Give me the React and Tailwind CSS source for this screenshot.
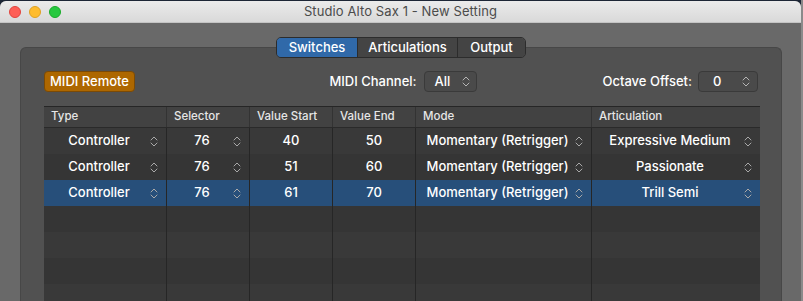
import React from 'react'

const Chevrons = ({ className = '' }) => (
  <svg width="8" height="13" viewBox="0 0 8 13" className={className} fill="none" stroke="currentColor" strokeWidth="1" strokeLinecap="round" strokeLinejoin="round">
    <path d="M1 5 L4 2 L7 5" />
    <path d="M1 8 L4 11 L7 8" />
  </svg>
)

const cols = [
  { label: 'Type', w: 'w-[123px]' },
  { label: 'Selector', w: 'w-[83px]' },
  { label: 'Value Start', w: 'w-[83px]' },
  { label: 'Value End', w: 'w-[83px]' },
  { label: 'Mode', w: 'w-[176px]' },
  { label: 'Articulation', w: 'w-[168px]' },
]

const rows = [
  ['Controller', '76', '40', '50', 'Momentary (Retrigger)', 'Expressive Medium'],
  ['Controller', '76', '51', '60', 'Momentary (Retrigger)', 'Passionate'],
  ['Controller', '76', '61', '70', 'Momentary (Retrigger)', 'Trill Semi'],
]

// which columns are popup menus (text + chevrons)
const popup = [true, true, false, false, true, true]

export default function App() {
  const allRows = [...rows, null, null, null, null]

  return (
    <div className="w-[803px] h-[301px] overflow-hidden bg-[#1d2636] flex font-['Inter',sans-serif]">
      <div className="w-[801px] h-[301px] mt-[1px] rounded-t-[6px] overflow-hidden flex flex-col bg-[#696969]">
        {/* title bar */}
        <div className="h-[22px] shrink-0 relative flex items-center justify-center bg-gradient-to-b from-[#ebebeb] to-[#d9d9d9] border-b border-[#c4c4c4]">
          <div className="absolute left-[9px] top-[5px] flex gap-[8px]">
            <div className="w-[12px] h-[12px] rounded-full bg-[#fe5f57] border border-[#e0443e]" />
            <div className="w-[12px] h-[12px] rounded-full bg-[#febc2e] border border-[#dea123]" />
            <div className="w-[12px] h-[12px] rounded-full bg-[#28c840] border border-[#1aab29]" />
          </div>
          <span className="text-[13px] text-[#4b4b4b] tracking-[0.1px]">Studio Alto Sax 1 - New Setting</span>
        </div>

        {/* body */}
        <div className="flex-1 flex flex-col pt-[14px] pl-[20px] pr-[19px]">
          {/* tabs */}
          <div className="relative z-10 flex justify-center">
            <div className="flex h-[21px] rounded-[5px] border border-[#2c2c2c] overflow-hidden text-[13px] font-medium text-white">
              <div className="w-[80px] flex items-center justify-center bg-[#3069a9]">Switches</div>
              <div className="w-[100px] flex items-center justify-center bg-[#444444] border-l border-[#2c2c2c]">Articulations</div>
              <div className="w-[68px] flex items-center justify-center bg-[#444444] border-l border-[#2c2c2c]">Output</div>
            </div>
          </div>

          {/* panel */}
          <div className="-mt-[11px] flex-1 rounded-t-[6px] bg-[#515151] border-t border-x border-[#474747] pl-[23px] pr-[21px] pt-[23px]">
            {/* controls row */}
            <div className="grid grid-cols-3 items-center h-[21px] text-[13px] font-medium text-white">
              <div className="flex">
                <div className="h-[21px] w-[91px] flex items-center justify-center rounded-[4px] bg-[#ad6700] border border-[#7b4a06]">MIDI Remote</div>
              </div>
              <div className="flex items-center justify-center gap-[7px] pl-[2px]">
                <span>MIDI Channel:</span>
                <div className="h-[21px] w-[53px] flex items-center rounded-[4px] bg-[#4a4a4a] border border-[#3a3a3a] pl-[10px] pr-[6px]">
                  <span className="flex-1">All</span>
                  <Chevrons className="text-[#b5b5b5]" />
                </div>
              </div>
              <div className="flex items-center justify-end gap-[6px] pr-[2px]">
                <span>Octave Offset:</span>
                <div className="h-[21px] w-[60px] flex items-center rounded-[4px] bg-[#4a4a4a] border border-[#3a3a3a] pl-[14px] pr-[7px]">
                  <span className="flex-1">0</span>
                  <Chevrons className="text-[#b5b5b5]" />
                </div>
              </div>
            </div>

            {/* table */}
            <div className="mt-[14px] border-t border-[#262626] bg-[#363636]">
              <div className="flex h-[21px] bg-[#424242] border-b border-[#2a2a2a] text-[11.5px] font-medium text-[#e6e6e6]">
                {cols.map((c, i) => (
                  <div key={i} className={`${c.w} flex items-center pl-[7px] ${i < 5 ? 'border-r border-[#333333]' : ''}`}>{c.label}</div>
                ))}
              </div>
              {allRows.map((r, ri) => {
                const bg = ri === 2 ? 'bg-[#274f7a]' : ri % 2 === 0 ? 'bg-[#393939]' : 'bg-[#353535]'
                return (
                  <div key={ri} className={`flex h-[26px] ${bg} text-[13px] font-medium text-white`}>
                    {cols.map((c, ci) => (
                      <div key={ci} className={`${c.w} relative flex items-center ${ci < 5 ? 'border-r border-[#262626]' : ''}`}>
                        {r && (
                          <span className={`flex-1 text-center ${popup[ci] ? 'pr-[12px]' : ''}`}>{r[ci]}</span>
                        )}
                        {r && popup[ci] && (
                          <Chevrons className="absolute right-[8px] top-[7px] text-[#a9a9a9]" />
                        )}
                      </div>
                    ))}
                  </div>
                )
              })}
            </div>
          </div>
        </div>
      </div>
      <div className="w-[2px] h-[301px] bg-[#8a8a8a]" />
    </div>
  )
}
